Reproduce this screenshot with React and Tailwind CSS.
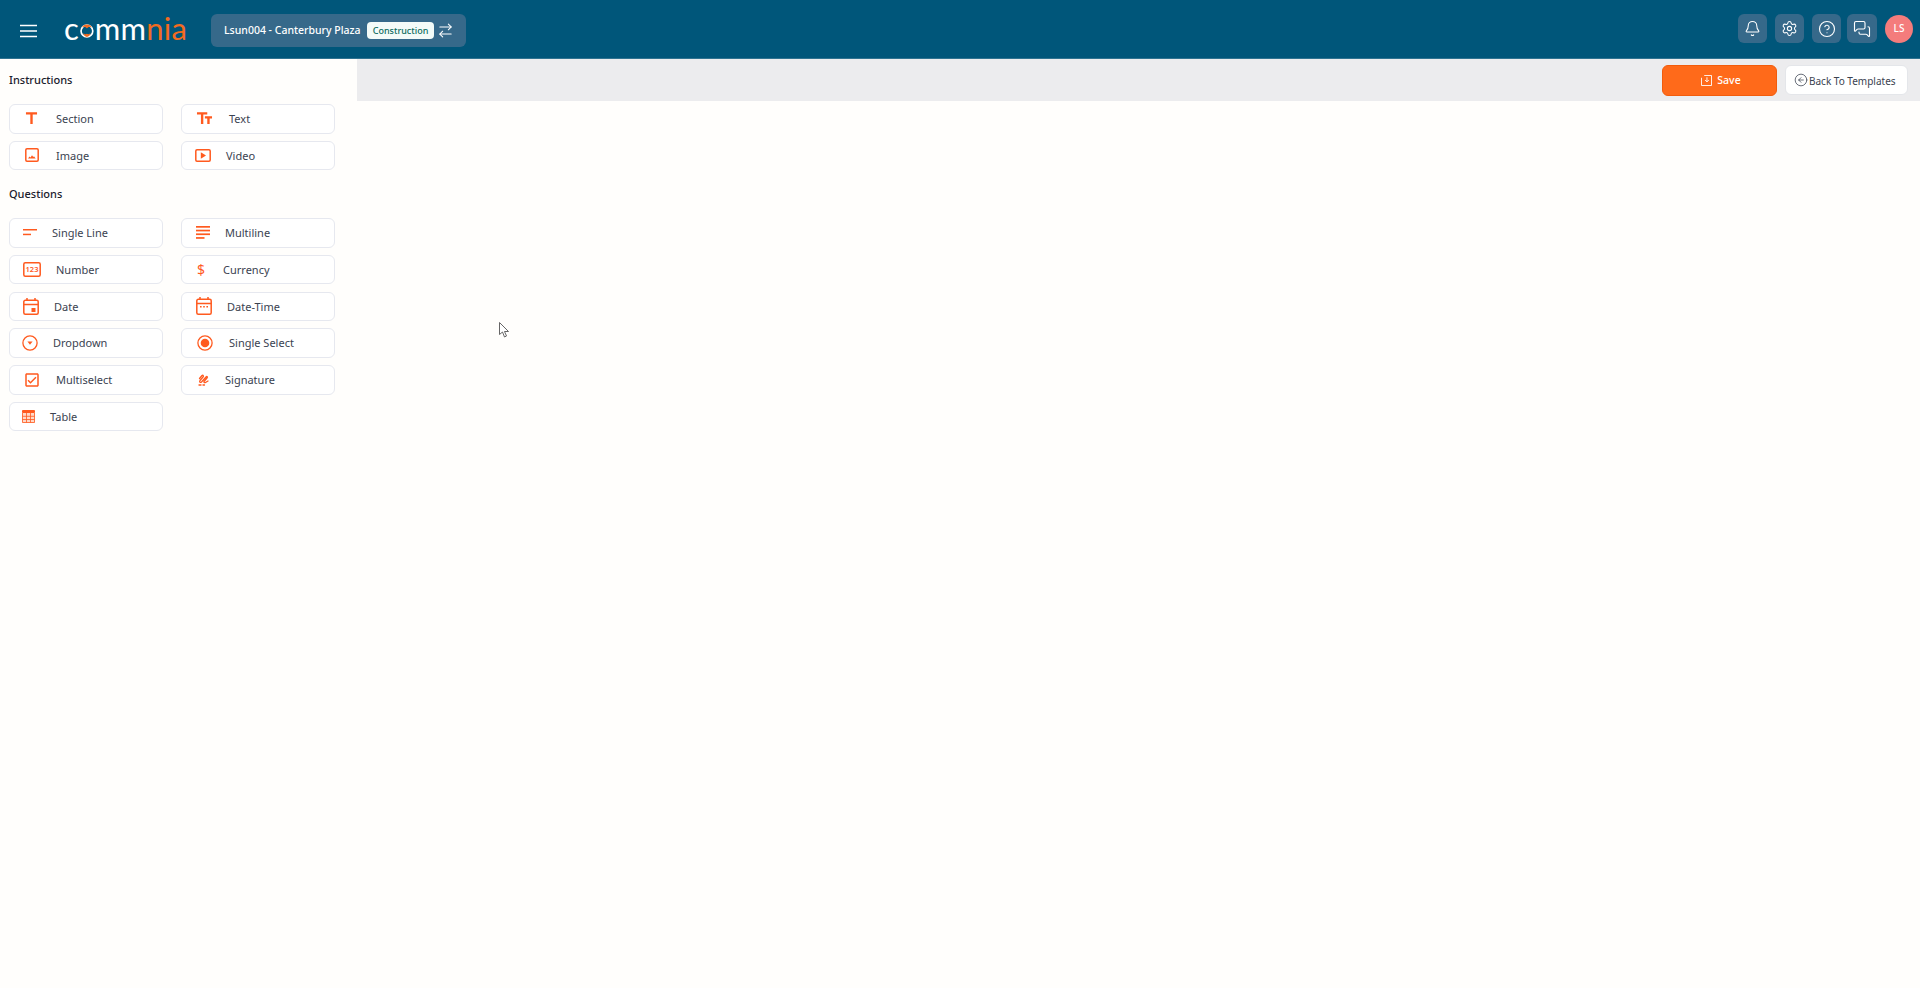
import React from 'react'
import { Bell, Settings, CircleHelp, MessagesSquare, ArrowRightLeft, CircleArrowLeft } from 'lucide-react'

function Mui({ d, className = 'w-4 h-4' }) {
  return (
    <svg viewBox="0 0 24 24" className={className} fill="currentColor">
      <path d={d} />
    </svg>
  )
}

const icons = {
  section: <Mui className="w-[19px] h-[19px]" d="M5 4v3h5.500v12h3V7H19V4z" />,
  text: <Mui className="w-[19px] h-[19px]" d="M2.500 4v3h5v12h3V7h5V4h-13zm19 5h-9v3h3v7h3v-7h3V9z" />,
  image: (
    <svg viewBox="0 0 14 14" className="w-[14px] h-[14px]" fill="none">
      <rect x=".8" y=".8" width="12.400" height="12.400" rx="1.200" stroke="currentColor" strokeWidth="1.500" />
      <path d="M3 10.500l1.500-2 1 1 1.500-2.300 1.300 1.800.7-.7 1.700 2.200z" fill="currentColor" />
    </svg>
  ),
  video: (
    <svg viewBox="0 0 16 13" className="w-[16px] h-[13px]" fill="none">
      <rect x=".8" y=".8" width="14.400" height="11.400" rx="1.200" stroke="currentColor" strokeWidth="1.500" />
      <path d="M5.800 3.300v6.400L11 6.500z" fill="currentColor" />
    </svg>
  ),
  single: (
    <svg viewBox="0 0 14 7" className="w-[14px] h-[7px]" fill="currentColor">
      <rect x="0" y="0" width="14" height="1.500" />
      <rect x="0" y="4.700" width="8" height="1.500" />
    </svg>
  ),
  multi: (
    <svg viewBox="0 0 14 13" className="w-[14px] h-[13px]" fill="currentColor">
      <rect x="0" y="0" width="14" height="1.700" />
      <rect x="0" y="3.700" width="14" height="1.700" />
      <rect x="0" y="7.400" width="14" height="1.700" />
      <rect x="0" y="11.100" width="8.500" height="1.700" />
    </svg>
  ),
  number: (
    <svg viewBox="0 0 18 15" className="w-[18px] h-[15px]">
      <rect x=".8" y=".8" width="16.400" height="13.400" rx="1.500" fill="none" stroke="currentColor" strokeWidth="1.500" />
      <text x="9" y="10.300" textAnchor="middle" fontSize="7.500" fontWeight="600" fill="currentColor" fontFamily="Noto Sans, sans-serif">123</text>
    </svg>
  ),
  date: (
    <svg viewBox="0 0 16 17" className="w-[16px] h-[17px]" fill="none">
      <rect x=".8" y="2.300" width="14.400" height="13.900" rx="1.500" stroke="currentColor" strokeWidth="1.500" />
      <path d="M.8 6.500h14.400M4 0v3M12 0v3" stroke="currentColor" strokeWidth="1.500" />
      <rect x="8.500" y="10" width="4" height="4" fill="currentColor" />
    </svg>
  ),
  datetime: (
    <svg viewBox="0 0 16 18" className="w-[16px] h-[18px]" fill="none">
      <rect x=".8" y="2.300" width="14.400" height="14.900" rx="1.500" stroke="currentColor" strokeWidth="1.500" />
      <path d="M.8 6.500h14.400M4 0v3M12 0v3" stroke="currentColor" strokeWidth="1.500" />
      <path d="M4 9h1.600v1.500H4zM7.200 9h1.600v1.500H7.200zM10.400 9H12v1.500h-1.600z" fill="currentColor" />
    </svg>
  ),
  dropdown: (
    <svg viewBox="0 0 16 16" className="w-[16px] h-[16px]" fill="none">
      <circle cx="8" cy="8" r="7.100" stroke="currentColor" strokeWidth="1.300" />
      <path d="M5.400 6.600h5.200L8 9.800z" fill="currentColor" />
    </svg>
  ),
  radio: (
    <svg viewBox="0 0 16 16" className="w-[16px] h-[16px]" fill="none">
      <circle cx="8" cy="8" r="7.100" stroke="currentColor" strokeWidth="1.300" />
      <circle cx="8" cy="8" r="4.300" fill="currentColor" />
    </svg>
  ),
  check: <Mui className="w-[18px] h-[18px]" d="M19 3H5c-1.100 0-2 .9-2 2v14c0 1.100.9 2 2 2h14c1.100 0 2-.9 2-2V5c0-1.100-.9-2-2-2zm0 16H5V5h14v14zM17.990 9l-1.410-1.420-6.590 6.590-2.580-2.570-1.420 1.410 4 3.990z" />,
  signature: (
    <svg viewBox="0 0 11 12" className="w-[11px] h-[12px]" fill="none" stroke="currentColor" strokeWidth="1.300" strokeLinecap="round" strokeLinejoin="round">
      <path d="M1.500 4.500L4 1.500C5 .7 6 2 5 3L2 6.500C1 8 2.500 9 3.500 8L8 3C9 2 10 3 9 4L6 7.500C5.500 8.500 6.500 9 7.500 8.500L10 7" />
      <path d="M1 11h2M5 11h1.500" />
    </svg>
  ),
  table: (
    <svg viewBox="0 0 13 13" className="w-[13px] h-[13px]" fill="none">
      <rect x="0" y="0" width="13" height="13" rx="1.500" fill="#ffd9c7" />
      <rect x="0" y="0" width="13" height="3" rx="1" fill="currentColor" />
      <path d="M.5 3v9.500h12V3M4.500 3v9.500M8.500 3v9.500M.5 6.300h12M.5 9.500h12" stroke="currentColor" strokeWidth=".8" />
    </svg>
  ),
}

const instructions = [
  { label: 'Section', icon: 'section', pad: 'pl-[12px]', gap: 'gap-[15px]' },
  { label: 'Text', icon: 'text', pad: 'pl-[13px]', gap: 'gap-[15px]' },
  { label: 'Image', icon: 'image', pad: 'pl-[15px]', gap: 'gap-[17px]' },
  { label: 'Video', icon: 'video', pad: 'pl-[13px]', gap: 'gap-[15px]' },
]

const questions = [
  { label: 'Single Line', icon: 'single', pad: 'pl-[13px]', gap: 'gap-[15px]' },
  { label: 'Multiline', icon: 'multi', pad: 'pl-[14px]', gap: 'gap-[15px]' },
  { label: 'Number', icon: 'number', pad: 'pl-[13px]', gap: 'gap-[15px]' },
  { label: 'Currency', icon: 'dollar', pad: 'pl-[15px]', gap: 'gap-[18px]' },
  { label: 'Date', icon: 'date', pad: 'pl-[13px]', gap: 'gap-[15px]' },
  { label: 'Date-Time', icon: 'datetime', pad: 'pl-[14px]', gap: 'gap-[15px]' },
  { label: 'Dropdown', icon: 'dropdown', pad: 'pl-[12px]', gap: 'gap-[15px]' },
  { label: 'Single Select', icon: 'radio', pad: 'pl-[15px]', gap: 'gap-[16px]' },
  { label: 'Multiselect', icon: 'check', pad: 'pl-[13px]', gap: 'gap-[15px]' },
  { label: 'Signature', icon: 'signature', pad: 'pl-[16px]', gap: 'gap-[16px]' },
  { label: 'Table', icon: 'table', pad: 'pl-[12px]', gap: 'gap-[15px]' },
]

function ToolButton({ item }) {
  return (
    <button className={`flex items-center h-[29.500px] bg-white border border-[#e6e8ef] rounded-md text-[11px] text-[#3a4250] ${item.pad} ${item.gap}`}>
      <span className="flex items-center justify-center text-[#ff5a1f]">
        {item.icon === 'dollar' ? <span className="text-[14px] leading-none">$</span> : icons[item.icon]}
      </span>
      <span className="pt-[1px]">{item.label}</span>
    </button>
  )
}

function Logo() {
  return (
    <div className="flex items-center shrink-0 w-[123px] ml-[27px] h-[30px] text-[31px] leading-none font-['Lato',sans-serif] tracking-[0.2px] text-white">
      <span className="-mt-[5px]">c</span>
      <svg viewBox="0 0 20 20" className="w-[18px] h-[18px] mx-[1px]" fill="none">
        <circle cx="10" cy="10" r="8.500" stroke="#fff" strokeWidth="2.400" />
        <path d="M2.500 5A8.500 8.500 0 0 1 17.500 5C15 3 12 3.500 10 6 8 3.500 5 3 2.500 5zM5 13c0 3 2.500 5.500 5 5.500s5-2.500 5-5.500c-1.500 2-3.500 2-5 1-1.500 1-3.500 1-5-1z" fill="#f26b21" />
      </svg>
      <span className="-mt-[5px]">mm</span>
      <span className="-mt-[5px] text-[#f26b21]">nia</span>
    </div>
  )
}

function HeaderIcon({ children, width = 'w-[29px]' }) {
  return (
    <div className={`flex items-center justify-center h-[29px] ${width} rounded-md bg-[#36698a] text-white`}>
      {children}
    </div>
  )
}

export default function App() {
  return (
    <div className="relative flex flex-col h-[988px] bg-[#fffefc] font-['Noto_Sans',sans-serif] overflow-hidden">
      {/* Top bar */}
      <header className="flex items-center h-[59px] shrink-0 bg-[#00567a] border-b border-[#2f7391] pt-[3px] pl-[20px] pr-[7px]">
        <svg viewBox="0 0 17 14" className="w-[17px] h-[14px] text-white" stroke="currentColor" strokeWidth="1.500" fill="none">
          <path d="M0 1.500h17M0 7h17M0 12.500h17" />
        </svg>
        <Logo />
        <div className="flex items-center h-[33px] w-[255px] ml-[24px] pl-[13px] rounded-md bg-[#36698a] text-white">
          <span className="w-[130px] text-[10.500px] font-medium whitespace-nowrap">Lsun004 - Canterbury Plaza</span>
          <span className="flex items-center justify-center shrink-0 w-[67px] h-[17px] ml-[13px] rounded bg-[#f3fbf8] text-[#0c6b5e] text-[9px] font-medium">
            Construction
          </span>
          <ArrowRightLeft className="shrink-0 w-[17px] h-[17px] ml-[3px]" strokeWidth={1.500} />
        </div>
        <div className="flex items-center ml-auto mb-[4px]">
          <HeaderIcon><Bell className="w-[17px] h-[17px]" strokeWidth={1.500} /></HeaderIcon>
          <div className="w-[8px]" />
          <HeaderIcon><Settings className="w-[17px] h-[17px]" strokeWidth={1.500} /></HeaderIcon>
          <div className="w-[8px]" />
          <HeaderIcon><CircleHelp className="w-[18px] h-[18px]" strokeWidth={1.500} /></HeaderIcon>
          <div className="w-[6px]" />
          <HeaderIcon width="w-[30px]"><MessagesSquare className="w-[18px] h-[18px]" strokeWidth={1.500} /></HeaderIcon>
          <div className="flex items-center justify-center w-[28px] h-[28px] ml-[8px] rounded-full bg-[#f47c7c] text-white text-[10px] font-medium">
            LS
          </div>
        </div>
      </header>

      <div className="flex flex-1">
        {/* Component palette */}
        <aside className="w-[357px] shrink-0 pl-[9px] pr-[22px] text-[#1a202c]">
          <h3 className="mt-[12px] text-[11px] font-medium leading-[18px]">Instructions</h3>
          <div className="grid grid-cols-2 gap-x-[18px] gap-y-[7px] mt-[15px]">
            {instructions.map((item) => <ToolButton key={item.label} item={item} />)}
          </div>
          <h3 className="mt-[15px] text-[11px] font-medium leading-[18px]">Questions</h3>
          <div className="grid grid-cols-2 gap-x-[18px] gap-y-[7.300px] mt-[15px]">
            {questions.map((item) => <ToolButton key={item.label} item={item} />)}
          </div>
        </aside>

        {/* Canvas */}
        <main className="flex-1">
          <div className="flex items-center justify-end gap-[8px] h-[42px] bg-[#ececee] pr-[12px]">
            <button className="flex items-center justify-center w-[115px] h-[31px] pl-[3px] pt-[2px] gap-[5px] rounded-md bg-[#ff6a1a] border border-[#f25c0c] text-white text-[10.500px] font-medium">
              <svg viewBox="0 0 12 12" className="w-[11px] h-[11px] -mt-[2px]" fill="none" stroke="currentColor" strokeWidth="1">
                <path d="M3.500.5H11.500V11.500H.5V3M6.500 2.500V7.500M4.500 5.500l2 2 2-2" />
              </svg>
              Save
            </button>
            <button className="flex items-center w-[123px] h-[30px] pl-[8px] pt-[2px] gap-[1px] rounded-md bg-white border border-[#e4e6ea] text-[#3a4250] text-[10px]">
              <CircleArrowLeft className="w-[14px] h-[14px] -mt-[2px]" strokeWidth={1.300} />
              Back To Templates
            </button>
          </div>
        </main>
      </div>

      {/* Mouse pointer captured in the screenshot */}
      <svg viewBox="0 0 11 16" className="absolute left-[499px] top-[322px] w-[11px] h-[16px]" fill="#fff" stroke="#555" strokeWidth=".9">
        <path d="M.5.5v12l3-2.500 2 5 2-1-2-4.500h4z" />
      </svg>
    </div>
  )
}
